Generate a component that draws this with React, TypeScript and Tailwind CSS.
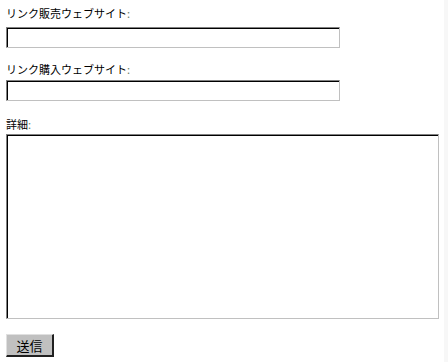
import React from 'react';

const insetBox =
  'block bg-white border border-t-[#808080] border-l-[#808080] border-r-[#c0c0c0] border-b-[#c0c0c0] shadow-[inset_1px_1px_0_#000]';

const Label: React.FC<{ text: string }> = ({ text }) => (
  <label className="block text-[11px] leading-[14px] text-black">
    {text}
    <span className="text-[#6f7f66]">:</span>
  </label>
);

const App: React.FC = () => {
  return (
    <div className="flex w-[448px] h-[362px] bg-white font-['Noto_Sans_CJK_JP','Noto_Sans',sans-serif]">
      <form className="flex-1 pl-[6px] pt-[6px]" onSubmit={(e) => e.preventDefault()}>
        <Label text="リンク販売ウェブサイト" />
        <input type="text" className={`${insetBox} mt-[7px] w-[334px] h-[21px] outline-none`} />

        <div className="mt-[14px]">
          <Label text="リンク購入ウェブサイト" />
          <input type="text" className={`${insetBox} mt-[4px] w-[334px] h-[21px] outline-none`} />
        </div>

        <div className="mt-[16px]">
          <Label text="詳細" />
          <textarea className={`${insetBox} mt-[3px] w-[433px] h-[185px] resize-none outline-none`} />
        </div>

        <button
          type="submit"
          className="mt-[15px] w-[48px] h-[23px] bg-[#c0c0c0] text-[13px] leading-none text-black border-t border-l border-r-2 border-b-2 border-t-[#e0e0e0] border-l-[#e0e0e0] border-r-[#202020] border-b-[#202020]"
        >
          送信
        </button>
      </form>
      <div className="w-[4px] bg-[#f7f7f7]" />
    </div>
  );
};

export default App;
